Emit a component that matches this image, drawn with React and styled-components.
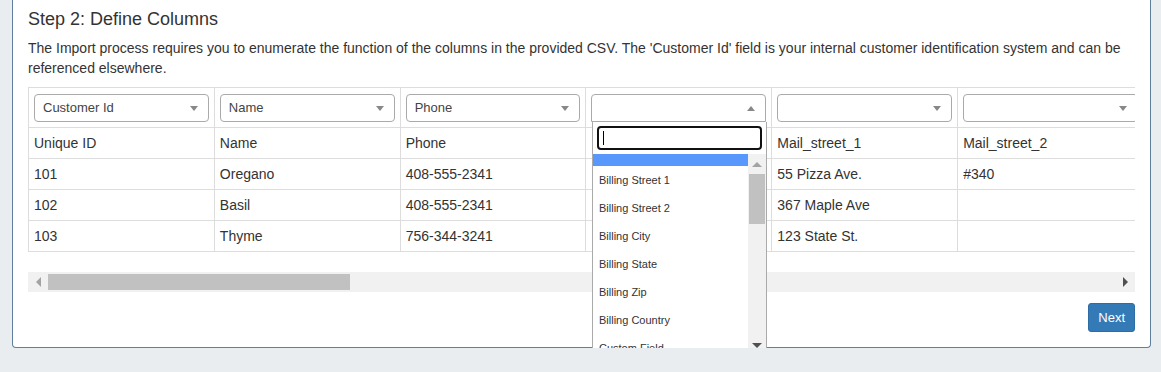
import React from "react";
import styled, { createGlobalStyle } from "styled-components";

const GlobalStyle = createGlobalStyle`
  html, body {
    margin: 0;
    padding: 0;
    background: #e9edf0;
    font-family: "Liberation Sans", Arial, sans-serif;
    color: #333;
  }
`;

const columns = [
  { field: "Customer Id", head: "Unique ID", rows: ["101", "102", "103"] },
  { field: "Name", head: "Name", rows: ["Oregano", "Basil", "Thyme"] },
  { field: "Phone", head: "Phone", rows: ["408-555-2341", "408-555-2341", "756-344-3241"] },
  { field: "", head: "", rows: ["", "", ""], open: true },
  { field: "", head: "Mail_street_1", rows: ["55 Pizza Ave.", "367 Maple Ave", "123 State St."] },
  { field: "", head: "Mail_street_2", rows: ["#340", "", ""] },
];

const options = [
  "",
  "Billing Street 1",
  "Billing Street 2",
  "Billing City",
  "Billing State",
  "Billing Zip",
  "Billing Country",
  "Custom Field",
];

const Page = styled.div`
  padding: 0 10px 0 12px;
`;

const Panel = styled.div`
  background: #fff;
  border: 1px solid #5f7f9c;
  border-top: none;
  border-radius: 0 0 4px 4px;
  padding: 9px 15px 15px;
`;

const Title = styled.h3`
  margin: 0;
  font-size: 18px;
  font-weight: normal;
  line-height: 20px;
  color: #333;
`;

const Intro = styled.p`
  margin: 9px 0 9px;
  font-size: 14px;
  line-height: 20px;
  color: #333;
`;

const TableArea = styled.div`
  position: relative;
`;

const Scroller = styled.div`
  overflow: hidden;
`;

const Table = styled.table`
  border-collapse: collapse;
  table-layout: fixed;
  width: ${(p) => p.$cols * 186}px;
`;

const Cell = styled.td`
  border: 1px solid #ddd;
  padding: ${(p) => (p.$select ? "6px 5px 5px" : "5px")};
  font-size: 14px;
  line-height: 20px;
  color: #333;
  white-space: nowrap;
  overflow: hidden;
  height: 20px;
`;

const Selection = styled.div`
  display: flex;
  align-items: center;
  justify-content: space-between;
  height: 26px;
  border: 1px solid #aaa;
  border-radius: ${(p) => (p.$open ? "4px 4px 0 0" : "4px")};
  padding: 0 10px 0 8px;
  font-size: 13px;
  color: #444;
  background: #fff;
`;

const Arrow = styled.span`
  width: 0;
  height: 0;
  border-left: 4px solid transparent;
  border-right: 4px solid transparent;
  ${(p) =>
    p.$up
      ? "border-bottom: 5px solid #888;"
      : "border-top: 5px solid #888;"}
`;

const Dropdown = styled.div`
  position: absolute;
  left: 564px;
  top: 35px;
  width: 173px;
  background: #fff;
  border: 1px solid #aaa;
  border-top: none;
  z-index: 5;
`;

const SearchWrap = styled.div`
  padding: 4px;
`;

const Search = styled.div`
  height: 20px;
  border: 2px solid #111;
  border-radius: 4px;
  display: flex;
  align-items: center;
  padding-left: 4px;
`;

const Caret = styled.span`
  width: 1px;
  height: 14px;
  background: #000;
`;

const Results = styled.div`
  display: flex;
  height: 201px;
  overflow: hidden;
`;

const OptionList = styled.ul`
  flex: 1;
  list-style: none;
  margin: -16px 0 0;
  padding: 0;
`;

const Option = styled.li`
  height: 28px;
  line-height: 28px;
  padding: 0 6px;
  font-size: 11px;
  color: #333;
  white-space: nowrap;
  background: ${(p) => (p.$active ? "#5897fb" : "transparent")};
`;

const VBar = styled.div`
  width: 18px;
  background: #f1f1f1;
  display: flex;
  flex-direction: column;
  align-items: center;
`;

const VThumb = styled.div`
  width: 16px;
  height: 50px;
  background: #c1c1c1;
`;

const VArrowBox = styled.div`
  height: 20px;
  display: flex;
  align-items: center;
  justify-content: center;
`;

const VArrow = styled.span`
  width: 0;
  height: 0;
  border-left: 5px solid transparent;
  border-right: 5px solid transparent;
  ${(p) =>
    p.$up
      ? "border-bottom: 5px solid #a3a3a3;"
      : "border-top: 5px solid #505050;"}
`;

const Spacer = styled.div`
  flex: 1;
`;

const HBar = styled.div`
  margin-top: 20px;
  height: 20px;
  background: #f1f1f1;
  display: flex;
  align-items: center;
`;

const HArrowBox = styled.div`
  width: 20px;
  height: 20px;
  display: flex;
  align-items: center;
  justify-content: center;
`;

const HArrow = styled.span`
  width: 0;
  height: 0;
  border-top: 5px solid transparent;
  border-bottom: 5px solid transparent;
  ${(p) =>
    p.$left
      ? "border-right: 5px solid #a3a3a3;"
      : "border-left: 5px solid #505050;"}
`;

const HThumb = styled.div`
  width: 302px;
  height: 16px;
  background: #c1c1c1;
`;

const Footer = styled.div`
  display: flex;
  justify-content: flex-end;
  margin-top: 11px;
`;

const Button = styled.button`
  font-family: inherit;
  font-size: 13px;
  line-height: 19px;
  padding: 4px 9px;
  color: #fff;
  background: #337ab7;
  border: 1px solid #2e6da4;
  border-radius: 3px;
  cursor: pointer;
`;

const Select = ({ value, open }) => (
  <Selection $open={open}>
    <span>{value}</span>
    <Arrow $up={open} />
  </Selection>
);

export default function App() {
  return (
    <Page>
      <GlobalStyle />
      <Panel>
        <Title>Step 2: Define Columns</Title>
        <Intro>
          The Import process requires you to enumerate the function of the columns in the provided
          CSV. The 'Customer Id' field is your internal customer identification system and can be
          referenced elsewhere.
        </Intro>
        <TableArea>
          <Scroller>
            <Table $cols={columns.length}>
              <tbody>
                <tr>
                  {columns.map((c, i) => (
                    <Cell key={i} $select>
                      <Select value={c.field} open={c.open} />
                    </Cell>
                  ))}
                </tr>
                <tr>
                  {columns.map((c, i) => (
                    <Cell key={i}>{c.head}</Cell>
                  ))}
                </tr>
                {[0, 1, 2].map((r) => (
                  <tr key={r}>
                    {columns.map((c, i) => (
                      <Cell key={i}>{c.rows[r]}</Cell>
                    ))}
                  </tr>
                ))}
              </tbody>
            </Table>
          </Scroller>
          <HBar>
            <HArrowBox>
              <HArrow $left />
            </HArrowBox>
            <HThumb />
            <Spacer />
            <HArrowBox>
              <HArrow />
            </HArrowBox>
          </HBar>
          <Dropdown>
            <SearchWrap>
              <Search>
                <Caret />
              </Search>
            </SearchWrap>
            <Results>
              <OptionList>
                {options.map((o, i) => (
                  <Option key={i} $active={i === 0}>
                    {o || "\u00a0"}
                  </Option>
                ))}
              </OptionList>
              <VBar>
                <VArrowBox>
                  <VArrow $up />
                </VArrowBox>
                <VThumb />
                <Spacer />
                <VArrowBox>
                  <VArrow />
                </VArrowBox>
              </VBar>
            </Results>
          </Dropdown>
        </TableArea>
        <Footer>
          <Button>Next</Button>
        </Footer>
      </Panel>
    </Page>
  );
}
